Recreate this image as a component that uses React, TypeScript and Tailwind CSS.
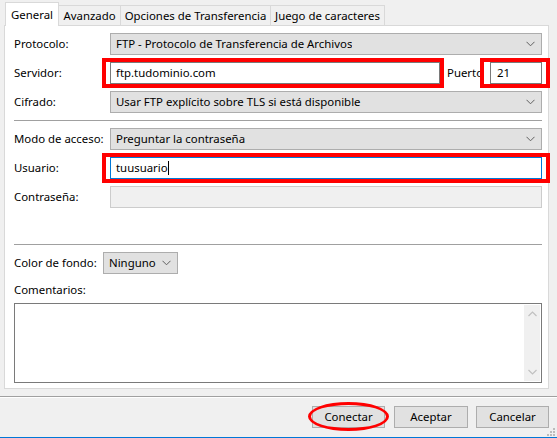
import React from 'react';

const font = { fontFamily: '"Noto Sans", "Liberation Sans", sans-serif' };

const Chevron = () => (
  <svg width="9" height="6" viewBox="0 0 9 6" className="shrink-0">
    <path d="M0.5 0.8 L4.5 4.8 L8.5 0.8" fill="none" stroke="#606060" strokeWidth="1" />
  </svg>
);

const Select = ({ value, className = '' }: { value: string; className?: string }) => (
  <div className={`h-[22px] flex items-center justify-between pl-[5px] pr-[6px] bg-[#e1e1e1] border border-[#adadad] ${className}`}>
    <span className="truncate">{value}</span>
    <Chevron />
  </div>
);

const Row = ({ label, children, className = '' }: { label: string; children: React.ReactNode; className?: string }) => (
  <div className={`flex items-center h-[22px] ${className}`}>
    <div className="w-[96px] shrink-0 whitespace-nowrap">{label}</div>
    <div className="flex-1 flex items-center h-full">{children}</div>
  </div>
);

const Tab = ({ label, active, w }: { label: string; active?: boolean; w: string }) =>
  active ? (
    <div className={`${w} h-[24px] bg-white border border-b-0 border-[#d9d9d9] flex items-center justify-center whitespace-nowrap relative z-10 -mb-px`}>
      {label}
    </div>
  ) : (
    <div className={`${w} h-[20px] bg-[#f0f0f0] border border-l-0 border-b-0 border-[#d9d9d9] flex items-center justify-center whitespace-nowrap`}>
      {label}
    </div>
  );

export default function App() {
  return (
    <div className="w-[557px] h-[438px] bg-[#f0f0f0] text-[11.4px] text-black flex flex-col overflow-hidden" style={font}>
      {/* tabs */}
      <div className="flex items-end pl-[5px] pt-[2px]">
        <Tab label="General" active w="w-[54px]" />
        <Tab label="Avanzado" w="w-[62px]" />
        <Tab label="Opciones de Transferencia" w="w-[150px]" />
        <Tab label="Juego de caracteres" w="w-[114px]" />
      </div>

      {/* panel */}
      <div className="ml-[4px] mr-[8px] h-[368px] bg-white border border-[#d9d9d9] pl-[9px] pr-[6px] flex flex-col">
        <Row label="Protocolo:" className="mt-[7px]">
          <Select value="FTP - Protocolo de Transferencia de Archivos" className="w-full" />
        </Row>

        <Row label="Servidor:" className="mt-[7px]">
          <div className="relative w-[330px] h-full">
            <div className="h-full border border-[#7a7a7a] bg-white flex items-center pl-[5px]">ftp.tudominio.com</div>
            <div className="absolute -left-[8px] -top-[4px] -right-[4px] -bottom-[4px] border-[4px] border-[#ff0000]" />
          </div>
          <span className="ml-[7px] w-[43px] whitespace-nowrap">Puerto</span>
          <div className="relative flex-1 h-full">
            <div className="h-full border border-[#7a7a7a] bg-white flex items-center pl-[6px]">21</div>
            <div className="absolute -left-[10px] -top-[4px] -right-[8px] -bottom-[4px] border-[4px] border-[#ff0000]" />
          </div>
        </Row>

        <Row label="Cifrado:" className="mt-[7px]">
          <Select value="Usar FTP explícito sobre TLS si está disponible" className="w-full" />
        </Row>

        <div className="h-px bg-[#a0a0a0] mt-[7px]" />

        <Row label="Modo de acceso:" className="mt-[7px]">
          <Select value="Preguntar la contraseña" className="w-full" />
        </Row>

        <Row label="Usuario:" className="mt-[7px]">
          <div className="relative w-full h-full">
            <div className="h-full border border-[#0078d7] bg-white flex items-center pl-[5px]">
              tuusuario<span className="w-px h-[14px] bg-black" />
            </div>
            <div className="absolute -left-[8px] -top-[4px] -right-[8px] -bottom-[4px] border-[4px] border-[#ff0000]" />
          </div>
        </Row>

        <Row label="Contraseña:" className="mt-[7px]">
          <div className="w-full h-full border border-[#cccccc] bg-[#f0f0f0]" />
        </Row>

        <div className="h-px bg-[#a0a0a0] mt-[36px]" />

        <div className="flex items-center h-[22px] mt-[7px]">
          <span className="w-[89px] whitespace-nowrap">Color de fondo:</span>
          <Select value="Ninguno" className="w-[75px]" />
        </div>

        <div className="h-[16px] mt-[8px] flex items-center">Comentarios:</div>

        <div className="mt-[5px] h-[80px] border border-[#7a7a7a] bg-white flex justify-end p-px">
          <div className="w-[16px] h-full bg-[#f0f0f0] flex flex-col items-center justify-between py-[6px]">
            <svg width="9" height="6" viewBox="0 0 9 6">
              <path d="M0.5 5 L4.5 1 L8.5 5" fill="none" stroke="#c0c0c0" strokeWidth="1.2" />
            </svg>
            <svg width="9" height="6" viewBox="0 0 9 6">
              <path d="M0.5 1 L4.5 5 L8.5 1" fill="none" stroke="#c0c0c0" strokeWidth="1.2" />
            </svg>
          </div>
        </div>
      </div>

      {/* bottom bar */}
      <div className="h-px bg-[#a0a0a0] mt-[7px]" />
      <div className="h-px bg-white" />
      <div className="flex justify-end pr-[8px] mt-[8px] gap-[8px]">
        <div className="relative w-[73px] h-[22px] mr-px">
          <button className="w-full h-full bg-[#e1e1e1] border border-[#adadad]">Conectar</button>
          <div className="absolute -left-[4px] -right-[4px] -top-[4px] -bottom-[3px] border-[3px] border-[#ff0000] rounded-[50%]" />
        </div>
        <button className="w-[74px] h-[22px] bg-[#e1e1e1] border border-[#adadad]">Aceptar</button>
        <button className="w-[73px] h-[22px] bg-[#e1e1e1] border border-[#adadad]">Cancelar</button>
      </div>
      <div className="flex-1 flex justify-end items-end pr-[2px] pb-[1px]">
        <svg width="8" height="8" viewBox="0 0 8 8">
          <rect x="6" y="0" width="2" height="2" fill="#bcbcbc" />
          <rect x="3" y="3" width="2" height="2" fill="#bcbcbc" />
          <rect x="6" y="3" width="2" height="2" fill="#bcbcbc" />
          <rect x="0" y="6" width="2" height="2" fill="#bcbcbc" />
          <rect x="3" y="6" width="2" height="2" fill="#bcbcbc" />
          <rect x="6" y="6" width="2" height="2" fill="#bcbcbc" />
        </svg>
      </div>
      <div className="h-px bg-[#0078d7]" />
    </div>
  );
}
